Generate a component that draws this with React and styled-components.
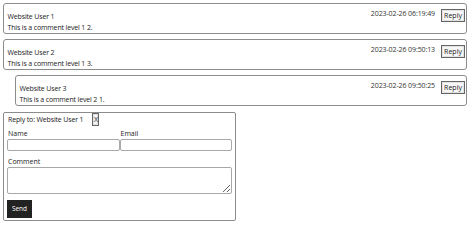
import React from "react";
import styled, { createGlobalStyle } from "styled-components";

const Global = createGlobalStyle`
  html, body { margin: 0; padding: 0; background: #fff; }
  body { font-family: "Open Sans", "Noto Sans", sans-serif; color: #222; }
  * { box-sizing: border-box; }
`;

const Page = styled.div`
  width: 474px;
  padding: 3px 7px 0 3px;
  display: flex;
  flex-direction: column;
  align-items: flex-start;
`;

const List = styled.div`
  width: 464px;
  display: flex;
  flex-direction: column;
  gap: 5px;
`;

const CommentBox = styled.div`
  height: 31px;
  margin-left: ${(p) => p.$level * 12}px;
  border: 1.5px solid #8c8c8c;
  border-radius: 3px;
  display: flex;
  align-items: flex-start;
  padding: 0 1px 0 3.5px;
`;

const Body = styled.div`
  flex: 1;
  padding-top: 6.5px;
  font-size: 7px;
  line-height: 11px;
  color: #222;
`;

const Line = styled.div`
  white-space: nowrap;
  letter-spacing: -0.15px;
`;

const Meta = styled.div`
  display: flex;
  align-items: center;
  gap: 6px;
  margin-top: 4.5px;
`;

const Stamp = styled.span`
  font-size: 7px;
  line-height: 10px;
  margin-top: -2px;
  color: #333;
  letter-spacing: -0.1px;
`;

const SmallButton = styled.button`
  height: 13px;
  width: ${(p) => p.$w}px;
  padding: 0;
  font-family: inherit;
  font-size: 7px;
  line-height: 11px;
  color: #222;
  background: #f7f7f7;
  border: 1px solid #666;
  box-shadow: inset 0 0 0 1px #e2e2e2;
  border-radius: 0;
`;

const Form = styled.div`
  margin-top: 6px;
  width: 233px;
  height: 109px;
  border: 1.5px solid #8c8c8c;
  border-radius: 2px;
  padding: 0.5px 3px 0 3px;
  display: flex;
  flex-direction: column;
  color: #222;
`;

const FormHead = styled.div`
  display: flex;
  align-items: center;
  gap: 9px;
  height: 12px;
  padding-left: 1px;
  font-size: 7px;
  letter-spacing: -0.15px;
`;

const Label = styled.div`
  font-size: 7px;
  line-height: 9px;
  margin-top: ${(p) => p.$mt}px;
  margin-bottom: 1px;
  padding-left: 1px;
`;

const Fields = styled.div`
  display: grid;
  grid-template-columns: 1fr 1fr;
  margin-top: 3px;
`;

const Input = styled.input`
  display: block;
  width: 100%;
  height: 12px;
  border: 1px solid #a8a8a8;
  border-radius: 2px;
  padding: 0 2px;
  font-size: 7px;
  font-family: inherit;
`;

const TextArea = styled.textarea`
  display: block;
  width: 100%;
  height: 27px;
  border: 1px solid #a8a8a8;
  border-radius: 2px;
  padding: 2px;
  font-size: 7px;
  font-family: inherit;
  margin: 0;
`;

const Send = styled.button`
  margin-top: 6px;
  width: 25px;
  height: 18px;
  background: #222;
  color: #fff;
  border: none;
  border-radius: 0;
  font-family: inherit;
  font-size: 6.5px;
  padding: 0;
`;

const comments = [
  { user: "Website User 1", text: "This is a comment level 1 2.", date: "2023-02-26 06:19:49", level: 0 },
  { user: "Website User 2", text: "This is a comment level 1 3.", date: "2023-02-26 09:50:13", level: 0 },
  { user: "Website User 3", text: "This is a comment level 2 1.", date: "2023-02-26 09:50:25", level: 1 },
];

export default function App() {
  return (
    <Page>
      <Global />
      <List>
        {comments.map((c) => (
          <CommentBox key={c.user} $level={c.level}>
            <Body>
              <Line>{c.user}</Line>
              <Line>{c.text}</Line>
            </Body>
            <Meta>
              <Stamp>{c.date}</Stamp>
              <SmallButton $w={24}>Reply</SmallButton>
            </Meta>
          </CommentBox>
        ))}
      </List>
      <Form>
        <FormHead>
          <span>Reply to: Website User 1</span>
          <SmallButton $w={7}>X</SmallButton>
        </FormHead>
        <Fields>
          <div>
            <Label $mt={0}>Name</Label>
            <Input />
          </div>
          <div>
            <Label $mt={0}>Email</Label>
            <Input />
          </div>
        </Fields>
        <Label $mt={6}>Comment</Label>
        <TextArea />
        <div>
          <Send>Send</Send>
        </div>
      </Form>
    </Page>
  );
}
